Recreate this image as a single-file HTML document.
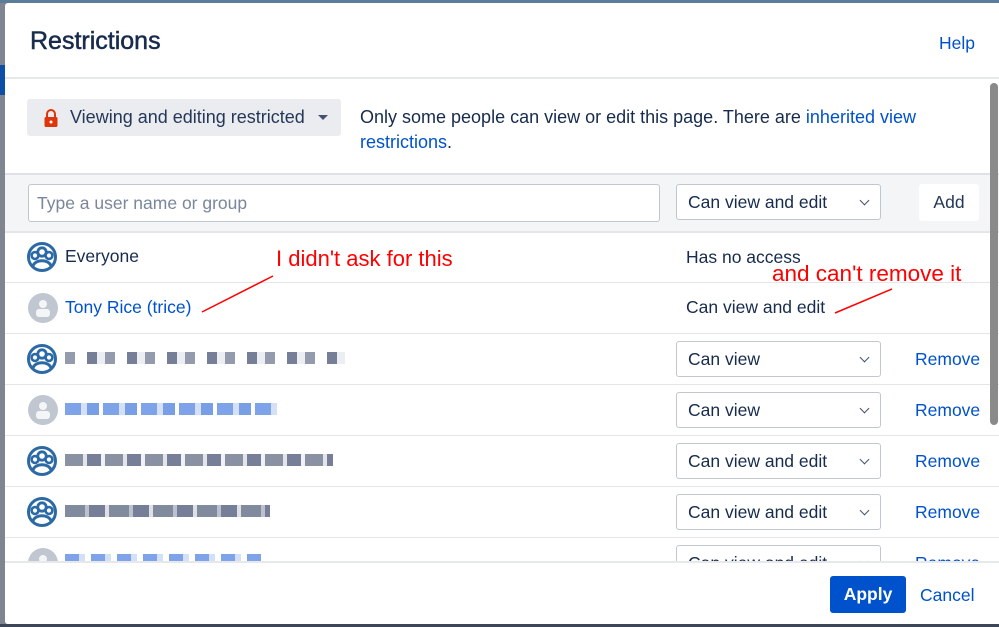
<!DOCTYPE html>
<html><head><meta charset="utf-8"><style>
*{box-sizing:border-box;margin:0;padding:0}
body{width:999px;height:627px;overflow:hidden;background:#7f8690;font-family:"Liberation Sans",Arial,sans-serif;position:relative;color:#172b4d}
.dlg{position:absolute;left:5px;top:3px;width:994px;height:621px;background:#fff;border-radius:3px 0 0 3px;overflow:hidden}
.abs{position:absolute}
h1{position:absolute;left:25px;top:24px;font-size:25px;font-weight:normal;color:#172b4d;-webkit-text-stroke:0.5px #172b4d}
a,.link{color:#0052cc;text-decoration:none}
.hr{position:absolute;left:0;width:994px;height:2px;background:#e6e8ec}
.sel{position:absolute;border:1px solid #c1c7d0;border-radius:3px;background:#fff;font-size:17.5px;padding-left:11px;line-height:34px;height:36px;width:205px}
.sel:after{content:"";position:absolute;right:12px;top:12px;width:6px;height:6px;border-right:1.5px solid #42526e;border-bottom:1.5px solid #42526e;transform:rotate(45deg)}
.row{position:absolute;left:0;width:994px;height:51px;border-top:1px solid #e4e6ea}
.txt{font-size:17.5px}
.blur{position:absolute;height:12px;opacity:.6}
.rm{position:absolute;left:910px;font-size:17.5px;color:#0052cc}
</style></head><body>
<div class="abs" style="left:0;top:0;width:999px;height:3px;background:#5b7d9c"></div>
<div class="abs" style="left:0;top:65px;width:5px;height:30px;background:#0d4ea6"></div>
<div class="dlg">
<h1>Restrictions</h1>
<a class="abs" style="left:934px;top:30px;font-size:17.5px">Help</a>
<div class="hr" style="top:74px"></div>
<div class="abs" style="left:22px;top:96px;width:314px;height:37px;background:#ebecf0;border-radius:3px"></div>
<svg class="abs" style="left:38px;top:106px" width="16" height="18" viewBox="0 0 16 18"><path d="M4 8V5a4 4 0 0 1 8 0v3" fill="none" stroke="#de350b" stroke-width="2"/><rect x="1.5" y="8" width="13" height="10" rx="1.5" fill="#de350b"/><circle cx="8" cy="13" r="1.5" fill="#fff"/></svg>
<div class="abs" style="left:65px;top:104px;color:#253858;font-size:18px">Viewing and editing restricted</div>
<div class="abs" style="left:313px;top:112px;border-left:5px solid transparent;border-right:5px solid transparent;border-top:5px solid #42526e"></div>
<div class="abs" style="left:355px;top:102px;line-height:25px;width:600px;font-size:18px">Only some people can view or edit this page. There are <a>inherited view</a><br><a>restrictions</a>.</div>
<div class="abs" style="left:0;top:170px;width:994px;height:59px;background:#f4f5f7;border-top:2px solid #dfe1e6;border-bottom:1px solid #e4e6ea"></div>
<div class="abs" style="left:23px;top:181px;width:632px;height:38px;background:#fff;border:1px solid #c1c7d0;border-radius:3px;font-size:17.5px;color:#7a869a;padding:8px 0 0 8px">Type a user name or group</div>
<div class="sel" style="left:671px;top:181px">Can view and edit</div>
<div class="abs" style="left:914px;top:181px;width:60px;height:37px;background:#fff;border-radius:3px;font-size:17.5px;text-align:center;line-height:37px;color:#253858">Add</div>

<div class="row" style="top:229px"></div>
<div class="row" style="top:279px"></div>
<div class="row" style="top:330px"></div>
<div class="row" style="top:381px"></div>
<div class="row" style="top:432px"></div>
<div class="row" style="top:483px"></div>
<div class="row" style="top:534px"></div>

<svg width="0" height="0" style="position:absolute"><defs>
<g id="grp"><circle cx="15" cy="15" r="13.5" fill="none" stroke="#2c6aa6" stroke-width="3"/><circle cx="15" cy="10" r="4.2" fill="#fff" stroke="#2c6aa6" stroke-width="2.8"/><circle cx="8" cy="13.5" r="3.4" fill="#fff" stroke="#2c6aa6" stroke-width="2.6"/><circle cx="22" cy="13.5" r="3.4" fill="#fff" stroke="#2c6aa6" stroke-width="2.6"/><path d="M6 24c2-7 16-7 18 0" fill="none" stroke="#2c6aa6" stroke-width="3"/></g>
<g id="usr"><circle cx="15" cy="15" r="15" fill="#c1c7d0"/><circle cx="15" cy="11" r="4" fill="#f4f5f7"/><rect x="8" y="16" width="14" height="8" rx="3" fill="#f4f5f7"/></g>
</defs></svg>

<svg class="abs" style="left:22px;top:239px" width="30" height="30"><use href="#grp"/></svg>
<div class="abs txt" style="left:60px;top:243px">Everyone</div>
<div class="abs txt" style="left:681px;top:244px">Has no access</div>

<svg class="abs" style="left:23px;top:290px" width="30" height="30"><use href="#usr"/></svg>
<div class="abs txt link" style="left:60px;top:294px">Tony Rice (trice)</div>
<div class="abs txt" style="left:681px;top:294px">Can view and edit</div>

<svg class="abs" style="left:22px;top:341px" width="30" height="30"><use href="#grp"/></svg>
<div class="blur" style="left:60px;top:349px;width:280px;background:repeating-linear-gradient(90deg,#4b5876 0 10px,#fff 10px 22px,#1b2a52 22px 32px,#e0e3ea 32px 40px)"></div>
<div class="sel" style="left:671px;top:338px">Can view</div><div class="rm" style="top:346px">Remove</div>

<svg class="abs" style="left:23px;top:392px" width="30" height="30"><use href="#usr"/></svg>
<div class="blur" style="left:60px;top:400px;width:212px;background:repeating-linear-gradient(90deg,#2a66d8 0 16px,#b8ccf0 16px 22px,#1e5fd6 22px 34px,#fff 34px 38px)"></div>
<div class="sel" style="left:671px;top:389px">Can view</div><div class="rm" style="top:397px">Remove</div>

<svg class="abs" style="left:22px;top:443px" width="30" height="30"><use href="#grp"/></svg>
<div class="blur" style="left:60px;top:451px;width:268px;background:repeating-linear-gradient(90deg,#3a4866 0 18px,#cdd1da 18px 22px,#1b2a52 22px 36px,#e6e8ee 36px 40px)"></div>
<div class="sel" style="left:671px;top:440px">Can view and edit</div><div class="rm" style="top:448px">Remove</div>

<svg class="abs" style="left:22px;top:494px" width="30" height="30"><use href="#grp"/></svg>
<div class="blur" style="left:60px;top:502px;width:205px;background:repeating-linear-gradient(90deg,#2e3c5e 0 20px,#8e98ae 20px 24px,#1b2a52 24px 40px,#c8ccd6 40px 44px)"></div>
<div class="sel" style="left:671px;top:491px">Can view and edit</div><div class="rm" style="top:499px">Remove</div>

<svg class="abs" style="left:23px;top:545px" width="30" height="30"><use href="#usr"/></svg>
<div class="blur" style="left:60px;top:551px;width:196px;background:repeating-linear-gradient(90deg,#2a66d8 0 14px,#b8ccf0 14px 20px,#fff 20px 26px)"></div>
<div class="sel" style="left:671px;top:542px">Can view and edit</div><div class="rm" style="top:550px">Remove</div>

<div class="abs" style="left:0;top:558px;width:994px;height:63px;background:#fff;border-top:2px solid #e6e8ec"></div>
<div class="abs" style="left:825px;top:573px;width:76px;height:37px;background:#0052cc;border-radius:3px;color:#fff;font-size:17.5px;font-weight:bold;text-align:center;line-height:37px">Apply</div>
<a class="abs" style="left:915px;top:582px;font-size:17.5px">Cancel</a>

<div class="abs" style="left:985px;top:80px;width:8px;height:342px;background:#8a8a8a;border-radius:4px"></div>

<div class="abs" style="left:271px;top:243px;font-size:22px;color:#ff0000">I didn't ask for this</div>
<div class="abs" style="left:767px;top:258px;font-size:22.5px;color:#ff0000">and can't remove it</div>
<svg class="abs" style="left:0;top:0" width="994" height="621"><line x1="197" y1="309" x2="268" y2="273" stroke="#ff0000" stroke-width="1.5"/><line x1="830" y1="310" x2="887" y2="286" stroke="#ff0000" stroke-width="1.5"/></svg>
</div>
<div class="abs" style="left:0;top:624px;width:999px;height:3px;background:#3d4656"></div>
</body></html>
